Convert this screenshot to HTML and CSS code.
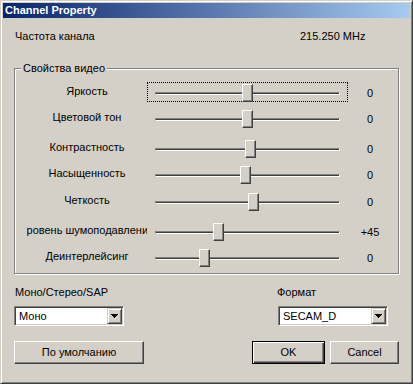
FILE: index.html
```html
<!DOCTYPE html>
<html>
<head>
<meta charset="utf-8">
<link rel="stylesheet" href="styles.css">
</head>
<body>
<div class="window">
  <div class="titlebar"><span class="title">Channel Property</span></div>
  <div class="content">
    <div class="freq"><span class="freq-label">Частота канала</span><span class="freq-value">215.250 MHz</span></div>
    <div class="group">
      <span class="legend">Свойства видео</span>
      <div class="row">
        <div class="label"><span>Яркость</span></div>
        <div class="slider focused"><div class="track"></div><div class="thumb" style="left:94px"></div></div>
        <div class="value">0</div>
      </div>
      <div class="row">
        <div class="label"><span>Цветовой тон</span></div>
        <div class="slider"><div class="track"></div><div class="thumb" style="left:94px"></div></div>
        <div class="value">0</div>
      </div>
      <div class="row">
        <div class="label"><span>Контрастность</span></div>
        <div class="slider"><div class="track"></div><div class="thumb" style="left:97px"></div></div>
        <div class="value">0</div>
      </div>
      <div class="row">
        <div class="label"><span>Насыщенность</span></div>
        <div class="slider"><div class="track"></div><div class="thumb" style="left:92px"></div></div>
        <div class="value">0</div>
      </div>
      <div class="row">
        <div class="label"><span>Четкость</span></div>
        <div class="slider"><div class="track"></div><div class="thumb" style="left:100px"></div></div>
        <div class="value">0</div>
      </div>
      <div class="row">
        <div class="label"><span>Уровень шумоподавления</span></div>
        <div class="slider"><div class="track"></div><div class="thumb" style="left:65px"></div></div>
        <div class="value">+45</div>
      </div>
      <div class="row">
        <div class="label"><span>Деинтерлейсинг</span></div>
        <div class="slider"><div class="track"></div><div class="thumb" style="left:51px"></div></div>
        <div class="value">0</div>
      </div>
    </div>
    <div class="audio">
      <div class="field">
        <div class="field-label">Моно/Стерео/SAP</div>
        <div class="combo"><span class="combo-text">Моно</span><span class="combo-btn"><svg width="7" height="4" viewBox="0 0 7 4" shape-rendering="crispEdges"><rect x="0" y="0" width="7" height="1" fill="#000"/><rect x="1" y="1" width="5" height="1" fill="#000"/><rect x="2" y="2" width="3" height="1" fill="#000"/><rect x="3" y="3" width="1" height="1" fill="#000"/></svg></span></div>
      </div>
      <div class="field field-right">
        <div class="field-label">Формат</div>
        <div class="combo"><span class="combo-text">SECAM_D</span><span class="combo-btn"><svg width="7" height="4" viewBox="0 0 7 4" shape-rendering="crispEdges"><rect x="0" y="0" width="7" height="1" fill="#000"/><rect x="1" y="1" width="5" height="1" fill="#000"/><rect x="2" y="2" width="3" height="1" fill="#000"/><rect x="3" y="3" width="1" height="1" fill="#000"/></svg></span></div>
      </div>
    </div>
    <div class="buttons">
      <button class="btn btn-default-values">По умолчанию</button>
      <div class="btn-group">
        <button class="btn btn-ok">OK</button>
        <button class="btn btn-cancel">Cancel</button>
      </div>
    </div>
  </div>
</div>
</body>
</html>
```

FILE: styles.css
```css
* { box-sizing: border-box; }
html, body { margin: 0; padding: 0; background: #d4d0c8; }
body {
  font-family: "Liberation Sans", Arial, sans-serif;
  font-size: 11px;
  line-height: 13px;
  color: #000;
}
.window {
  width: 413px;
  height: 384px;
  background: #d4d0c8;
  border: 1px solid;
  border-color: #d4d0c8 #404040 #404040 #d4d0c8;
  box-shadow: inset 1px 1px #fff, inset -1px -1px #808080;
  padding: 2px;
  display: flex;
  flex-direction: column;
}
.titlebar {
  height: 15px;
  background: linear-gradient(to right, #0a246a, #a6caf0);
  padding-left: 2px;
  flex-shrink: 0;
}
.title {
  color: #fff;
  font-weight: bold;
  font-size: 11px;
  line-height: 15px;
  white-space: nowrap;
}
.content {
  padding-left: 11px;
  display: flex;
  flex-direction: column;
}
.freq {
  margin-top: 12px;
  height: 13px;
  display: grid;
  grid-template-columns: 286px auto;
}
.freq-label { padding-left: 1px; }
.group {
  position: relative;
  margin-top: 25px;
  width: 385px;
  height: 206px;
  border: 1px solid #808080;
  box-shadow: inset 1px 1px #fff, 1px 1px 0 #fff;
  padding: 13px 0 0 12px;
}
.legend {
  position: absolute;
  top: -7px;
  left: 6px;
  padding: 0 2px;
  background: #d4d0c8;
  white-space: nowrap;
}
.row {
  display: grid;
  grid-template-columns: 120px 201px 44px;
  height: 20px;
}
.row:nth-of-type(2) { margin-top: 6px; }
.row:nth-of-type(3) { margin-top: 10px; }
.row:nth-of-type(4) { margin-top: 6px; }
.row:nth-of-type(5) { margin-top: 7px; }
.row:nth-of-type(6) { margin-top: 10px; }
.row:nth-of-type(7) { margin-top: 6px; }
.label {
  display: flex;
  justify-content: center;
  overflow: hidden;
  padding-top: 3px;
  white-space: nowrap;
}
.label span { flex-shrink: 0; }
.slider {
  position: relative;
  height: 20px;
  border: 1px dotted transparent;
}
.slider.focused { border-color: #000; }
.track {
  margin: 9px 0 0 7px;
  width: 185px;
  height: 3px;
  background: #404040;
  border-top: 1px solid #808080;
  border-left: 1px solid #808080;
  border-bottom: 1px solid #fff;
  border-right: 1px solid #fff;
}
.thumb {
  position: absolute;
  top: 1px;
  width: 11px;
  height: 18px;
  background: #d4d0c8;
  border: 1px solid;
  border-color: #fff #404040 #404040 #fff;
  box-shadow: inset -1px -1px #808080;
}
.value {
  text-align: center;
  padding-top: 5px;
}
.audio {
  margin-top: 12px;
  display: grid;
  grid-template-columns: 263px auto;
}
.field { display: flex; flex-direction: column; }
.field-label { height: 13px; padding-left: 1px; }
.field-right .field-label { padding-left: 0; }
.field-right .combo { margin-left: 1px; }
.combo {
  margin-top: 7px;
  width: 110px;
  height: 20px;
  background: #fff;
  border: 1px solid;
  border-color: #808080 #fff #fff #808080;
  box-shadow: inset 1px 1px #404040, inset -1px -1px #d4d0c8;
  padding: 1px;
  display: flex;
}
.combo-text {
  flex: 1;
  padding-left: 3px;
  line-height: 16px;
  white-space: nowrap;
}
.combo-btn {
  width: 15px;
  height: 16px;
  background: #d4d0c8;
  border: 1px solid;
  border-color: #d4d0c8 #404040 #404040 #d4d0c8;
  box-shadow: inset 1px 1px #fff, inset -1px -1px #808080;
  display: flex;
  align-items: center;
  justify-content: center;
}
.combo-btn svg { display: block; }
.buttons {
  margin-top: 15px;
  width: 385px;
  display: flex;
  justify-content: space-between;
}
.btn-group { display: flex; gap: 5px; }
.btn {
  font-family: "Liberation Sans", Arial, sans-serif;
  font-size: 11px;
  line-height: 13px;
  color: #000;
  height: 23px;
  padding: 0;
  margin: 0;
  background: #d4d0c8;
  border: 1px solid;
  border-color: #fff #404040 #404040 #fff;
  box-shadow: inset -1px -1px #808080;
  border-radius: 0;
}
.btn-default-values { width: 130px; }
.btn-ok {
  width: 73px;
  border: 1px solid #000;
  box-shadow: inset 1px 1px #fff, inset -1px -1px #404040, inset -2px -2px #808080;
}
.btn-cancel { width: 69px; }
```
